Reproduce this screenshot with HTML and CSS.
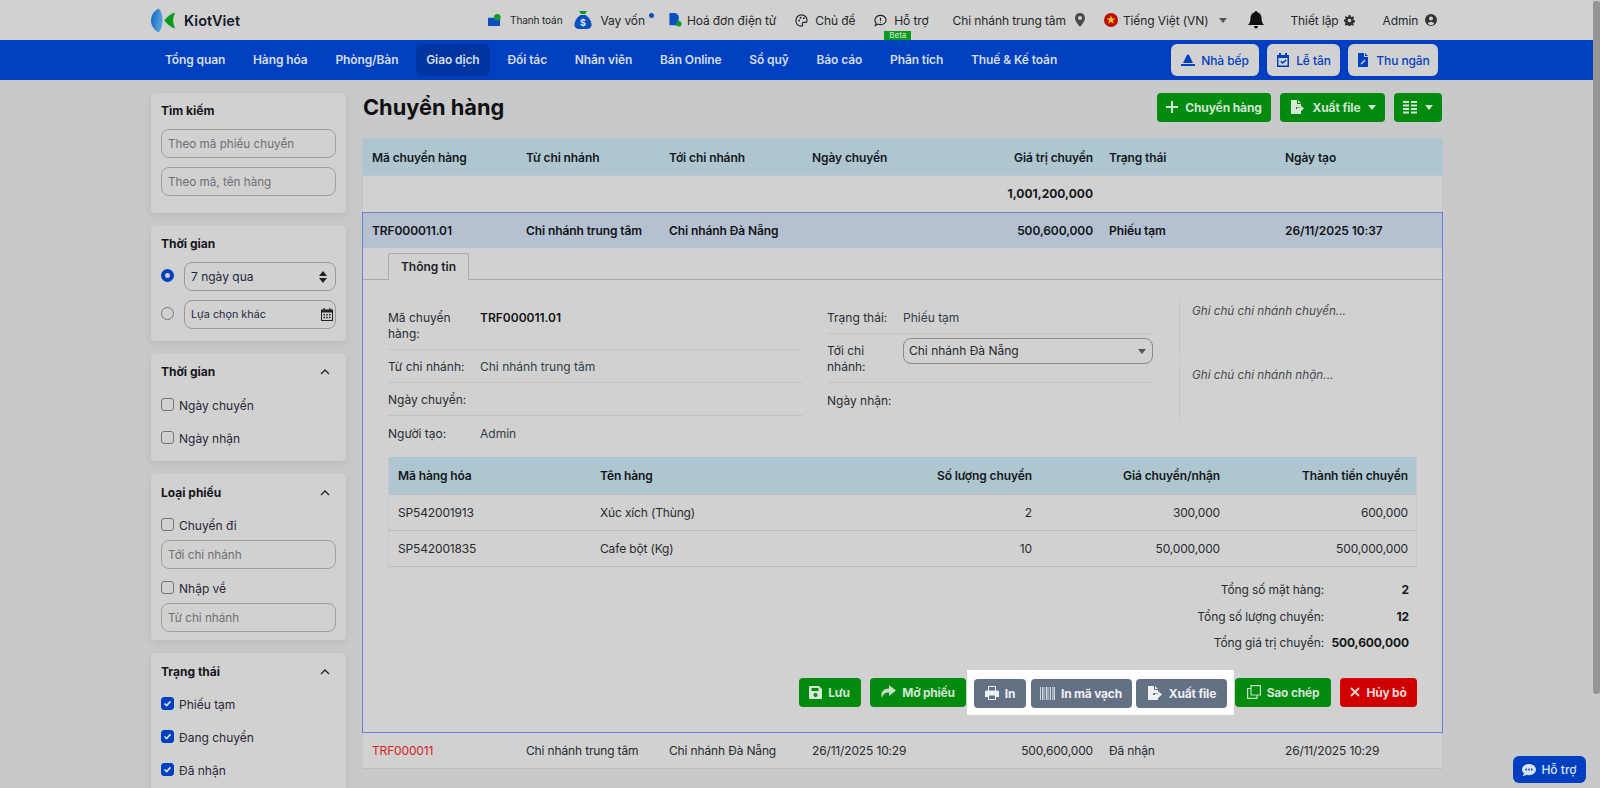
FILE: index.html
```html
<!DOCTYPE html>
<html lang="vi">
<head>
<meta charset="utf-8">
<title>Chuyển hàng</title>
<link rel="stylesheet" href="styles.css">
</head>
<body>
<div class="page">
  <header class="topbar">
    <div class="wrap top-in">
      <div class="logo">
        <svg class="logo-ic" viewBox="0 0 26 26"><defs><linearGradient id="lg" x1="0" x2="1" y1="0" y2="0.4"><stop offset="0" stop-color="#0d5fc0"/><stop offset="1" stop-color="#5aa4dc"/></linearGradient></defs><path fill="url(#lg)" d="M8 0.5C3 3 0 8 0 13s3 10 8 12.5c3-3 4-8 4-12.5S11 3.500 8 .5z"/><path fill="#0a9a1c" d="M25 5c-1 3-2 5-2 8s1 5 2 8c-4-.5-8-4-11-8 3-4 7-7.500 11-8z"/></svg>
        <span class="logo-t">KiotViet</span>
      </div>
      <div class="tl">
        <div class="ti"><svg class="i13" viewBox="0 0 14 14"><path fill="#0a4fc0" d="M0 4h8v1h5v8H0z"/><circle cx="10" cy="3.500" r="3.500" fill="#0f9a2a"/></svg><span class="small">Thanh toán</span></div>
        <div class="ti m12 g8"><svg class="i18" viewBox="0 0 18 18"><path fill="#0a9a1c" d="M5 0h8l-2 3H7z"/><path fill="#0a4fc0" d="M6.500 4h5C15 6 18 11 17.500 14.500 17 17 15 18 13 18H5c-2 0-4-1-4.500-3.500C0 11 3 6 6.500 4z"/><text x="9" y="14.500" class="dollar">$</text></svg><span class="dt">Vay vốn</span><span class="dot"></span></div>
        <div class="ti m14 g5"><svg class="i14" viewBox="0 0 14 15"><path fill="#0a4fc0" d="M1 0h7l3 3v10H1z"/><circle cx="11" cy="11.500" r="3" fill="#0f9a2a"/></svg><span>Hoá đơn điện tử</span></div>
        <div class="ti m19"><svg class="i13" viewBox="0 0 14 14"><path fill="none" stroke="#222" stroke-width="1.200" d="M7 1C3.500 1 1 3.500 1 7s2.500 6 6 6c1.500 0 1.500-1 1-2-.4-1 0-2 1.500-2H12c1 0 1-1 1-2 0-3.500-2.500-6-6-6z"/><circle cx="4.500" cy="7" r="1" fill="#222"/><circle cx="6" cy="4" r="1" fill="#222"/><circle cx="9.500" cy="4.500" r="1" fill="#222"/></svg><span>Chủ đề</span></div>
        <div class="ti m19 beta-host"><svg class="i13" viewBox="0 0 14 14"><path fill="none" stroke="#222" stroke-width="1.200" d="M7 1.500c3.300 0 6 2.200 6 5s-2.700 5-6 5c-1 0-2-.2-2.800-.6L1.500 12.500l.8-2.600C1.500 9 1 7.800 1 6.500c0-2.800 2.700-5 6-5z"/><path stroke="#222" stroke-width="1.200" d="M7 4v3.500M7 8.500v1"/></svg><span>Hỗ trợ</span><span class="beta">Beta</span></div>
        <div class="ti m24"><span>Chi nhánh trung tâm</span><svg class="i-pin" viewBox="0 0 10 14"><path fill="#4a4a4a" fill-rule="evenodd" d="M5 0C2 0 0 2.200 0 5c0 3 3 6.500 5 9 2-2.500 5-6 5-9 0-2.800-2-5-5-5zm0 3a2 2 0 110 4 2 2 0 010-4z"/></svg></div>
        <div class="ti m19 g5"><svg class="i14" viewBox="0 0 14 14"><circle cx="7" cy="7" r="7" fill="#c00d0d"/><path fill="#e8c810" d="M7 2.500l1.200 3h3.200L8.800 7.500l1 3.200L7 8.800l-2.800 1.900 1-3.200-2.600-2h3.200z"/></svg><span>Tiếng Việt (VN)</span><span class="caret caret-t"></span></div>
        <div class="ti m21"><svg class="i-bell" viewBox="0 0 16 18"><path fill="#111" d="M8 0c.8 0 1.300.6 1.300 1.300C12 2 13.500 4.200 13.500 7c0 4 1 5.500 2.500 7H0c1.500-1.500 2.500-3 2.500-7 0-2.800 1.500-5 4.200-5.700C6.700.6 7.200 0 8 0zM6 15h4c0 1.500-1 2.500-2 2.500S6 16.500 6 15z"/></svg></div>
        <div class="ti m26"><span>Thiết lập</span><svg class="i-gear" viewBox="0 0 12 12"><path fill="#333" fill-rule="evenodd" d="M5 0h2l.3 1.600 1.300.6L10 1.300 11.200 3l-1 1.200.3 1.300 1.500.5v2l-1.500.5-.4 1.300.9 1.200L10 11.700l-1.400-.9-1.300.6L7 12H5l-.3-.6-1.300-.6-1.400.9L.8 10l.9-1.200-.4-1.300L0 7V5l1.500-.5.300-1.300-1-1.200L2 1.300l1.400.9 1.300-.6zM6 4a2 2 0 100 4 2 2 0 000-4z"/></svg></div>
        <div class="ti m28"><span>Admin</span><svg class="i-user" viewBox="0 0 12 12"><path fill="#333" fill-rule="evenodd" d="M6 0a6 6 0 110 12A6 6 0 016 0zm0 2.500a2 2 0 100 4 2 2 0 000-4zM2.800 9.500c.8 1 2 1.500 3.200 1.500s2.400-.5 3.200-1.500C8.800 8.500 7.500 8 6 8s-2.800.5-3.200 1.500z"/></svg></div>
      </div>
    </div>
  </header>

  <nav class="navbar">
    <div class="wrap nav-in">
      <a class="ni">Tổng quan</a><a class="ni">Hàng hóa</a><a class="ni">Phòng/Bàn</a><a class="ni ni-on">Giao dịch</a><a class="ni">Đối tác</a><a class="ni">Nhân viên</a><a class="ni">Bán Online</a><a class="ni">Sổ quỹ</a><a class="ni">Báo cáo</a><a class="ni">Phân tích</a><a class="ni">Thuế &amp; Kế toán</a>
      <div class="nav-btns">
        <a class="nb nb1"><svg class="i14" viewBox="0 0 14 14"><path fill="#0040c0" d="M7 1.500c.6 0 1 .4 1.300 1L12 10H2l3.700-7.500c.3-.6.700-1 1.300-1zM0 11h14v2H0z"/></svg>Nhà bếp</a>
        <a class="nb nb2"><svg class="i14" viewBox="0 0 14 14"><path fill="#0040c0" fill-rule="evenodd" d="M3 0h2v2h4V0h2v2h2v12H1V2h2zm-.5 5v7.500h9V5zm7.200 1.500l1 1L6.500 11 4.200 8.700l1-1 1.300 1.300z"/></svg>Lễ tân</a>
        <a class="nb nb3"><svg class="i14" viewBox="0 0 14 14"><path fill="#0040c0" fill-rule="evenodd" d="M2 0h6v4h4v10H2zM9 0l3 3H9zM8.500 6.500L5 10l-.5 1.500L6 11l3.500-3.500z"/></svg>Thu ngân</a>
      </div>
    </div>
  </nav>

  <div class="wrap body-grid">
    <aside class="side">
      <section class="card c1">
        <h3 class="ct">Tìm kiếm</h3>
        <input class="inp" placeholder="Theo mã phiếu chuyển">
        <input class="inp mt9" placeholder="Theo mã, tên hàng">
      </section>
      <section class="card c2">
        <h3 class="ct">Thời gian</h3>
        <div class="rad-row"><span class="radio radio-on"></span><div class="fake"><span>7 ngày qua</span><svg class="i-sort" viewBox="0 0 8 12"><path fill="#222" d="M4 0l4 5H0zM4 12L0 7h8z"/></svg></div></div>
        <div class="rad-row mt9"><span class="radio"></span><div class="fake fake-sm"><span>Lựa chọn khác</span><svg class="i-cal" viewBox="0 0 12 13"><path fill="#222" fill-rule="evenodd" d="M2.500 0h1.200v1.500h4.600V0h1.200v1.500H12V13H0V1.500h2.500zM1 4.500V12h10V4.500zM2.500 6h1.500v1.500H2.500zM5.200 6h1.500v1.500H5.200zM8 6h1.500v1.500H8zM2.500 8.800h1.500v1.500H2.500zM5.200 8.800h1.500v1.500H5.200zM8 8.800h1.500v1.500H8z"/></svg></div></div>
      </section>
      <section class="card c3">
        <div class="ct-row"><h3 class="ct">Thời gian</h3><svg class="chev" viewBox="0 0 10 6"><path fill="none" stroke="#222" stroke-width="1.300" d="M1 5l4-4 4 4"/></svg></div>
        <label class="chk"><span class="cb"></span>Ngày chuyển</label>
        <label class="chk chk-gap"><span class="cb"></span>Ngày nhận</label>
      </section>
      <section class="card c4">
        <div class="ct-row"><h3 class="ct">Loại phiếu</h3><svg class="chev" viewBox="0 0 10 6"><path fill="none" stroke="#222" stroke-width="1.300" d="M1 5l4-4 4 4"/></svg></div>
        <label class="chk"><span class="cb"></span>Chuyển đi</label>
        <input class="inp mt5" placeholder="Tới chi nhánh">
        <label class="chk mt10"><span class="cb"></span>Nhập về</label>
        <input class="inp mt5" placeholder="Từ chi nhánh">
      </section>
      <section class="card c5">
        <div class="ct-row"><h3 class="ct">Trạng thái</h3><svg class="chev" viewBox="0 0 10 6"><path fill="none" stroke="#222" stroke-width="1.300" d="M1 5l4-4 4 4"/></svg></div>
        <label class="chk"><span class="cb cb-on"><svg viewBox="0 0 13 13"><path fill="none" stroke="#d8e0f0" stroke-width="2" d="M3 6.500l2.500 2.500L10 4"/></svg></span>Phiếu tạm</label>
        <label class="chk chk-gap2"><span class="cb cb-on"><svg viewBox="0 0 13 13"><path fill="none" stroke="#d8e0f0" stroke-width="2" d="M3 6.500l2.500 2.500L10 4"/></svg></span>Đang chuyển</label>
        <label class="chk chk-gap2"><span class="cb cb-on"><svg viewBox="0 0 13 13"><path fill="none" stroke="#d8e0f0" stroke-width="2" d="M3 6.500l2.500 2.500L10 4"/></svg></span>Đã nhận</label>
      </section>
    </aside>

    <main class="main">
      <div class="head">
        <h1 class="title">Chuyển hàng</h1>
        <div class="head-btns">
          <a class="btn green big hb1"><svg class="i12" viewBox="0 0 12 12"><path stroke="#d8e8d8" stroke-width="2" d="M6 0v12M0 6h12"/></svg>Chuyển hàng</a>
          <a class="btn green big hb2"><svg class="i16" viewBox="0 0 16 16"><path fill="#d8e8d8" d="M2 1h6v4h4v3H7v2h5v5H2zM9 1l3 3H9zM11 6l4 3.500-4 3.500v-2.500H8v-2h3z"/></svg>Xuất file<span class="caret caret-l"></span></a>
          <a class="btn green big grid-btn"><svg class="i14" viewBox="0 0 14 14"><path fill="#d8e8d8" d="M0 1h6v2H0zM8 1h6v2H8zM0 4.500h6v2H0zM8 4.500h6v2H8zM0 8h6v2H0zM8 8h6v2H8zM0 11.500h6v2H0zM8 11.500h6v2H8z"/></svg><span class="caret caret-l"></span></a>
        </div>
      </div>

      <div class="table">
        <div class="tr th"><div>Mã chuyển hàng</div><div>Từ chi nhánh</div><div>Tới chi nhánh</div><div>Ngày chuyển</div><div class="r">Giá trị chuyển</div><div>Trạng thái</div><div>Ngày tạo</div></div>
        <div class="tr tt"><div></div><div></div><div></div><div></div><div class="r">1,001,200,000</div><div></div><div></div></div>
        <div class="detail">
          <div class="tr sel"><div>TRF000011.01</div><div>Chi nhánh trung tâm</div><div>Chi nhánh Đà Nẵng</div><div></div><div class="r">500,600,000</div><div>Phiếu tạm</div><div>26/11/2025 10:37</div></div>
          <div class="tabs"><div class="tab">Thông tin</div></div>
          <div class="info">
            <div class="col-l">
              <div class="ir ir1"><span class="il">Mã chuyển hàng:</span><b>TRF000011.01</b></div>
              <div class="ir"><span class="il">Từ chi nhánh:</span><span class="iv">Chi nhánh trung tâm</span></div>
              <div class="ir"><span class="il">Ngày chuyển:</span></div>
              <div class="ir ir-last"><span class="il">Người tạo:</span><span class="iv">Admin</span></div>
            </div>
            <div class="col-r">
              <div class="ir ir-a"><span class="il il-r">Trạng thái:</span><span class="iv">Phiếu tạm</span></div>
              <div class="ir ir-b"><span class="il il-r">Tới chi nhánh:</span><div class="sel-box"><span>Chi nhánh Đà Nẵng</span><span class="caret"></span></div></div>
              <div class="ir ir-last"><span class="il il-r">Ngày nhận:</span></div>
            </div>
            <div class="col-n">
              <div class="note">Ghi chú chi nhánh chuyển...</div>
              <div class="note">Ghi chú chi nhánh nhận...</div>
            </div>
          </div>
          <div class="items">
            <div class="itr ith"><div>Mã hàng hóa</div><div>Tên hàng</div><div class="r">Số lượng chuyển</div><div class="r">Giá chuyển/nhận</div><div class="r">Thành tiền chuyển</div></div>
            <div class="itr"><div>SP542001913</div><div>Xúc xích (Thùng)</div><div class="r">2</div><div class="r">300,000</div><div class="r">600,000</div></div>
            <div class="itr"><div>SP542001835</div><div>Cafe bột (Kg)</div><div class="r">10</div><div class="r">50,000,000</div><div class="r">500,000,000</div></div>
          </div>
          <div class="sum">
            <div class="sr"><span>Tổng số mặt hàng:</span><b>2</b></div>
            <div class="sr"><span>Tổng số lượng chuyển:</span><b>12</b></div>
            <div class="sr"><span>Tổng giá trị chuyển:</span><b>500,600,000</b></div>
          </div>
          <div class="acts">
            <a class="btn green b-luu"><svg class="i13" viewBox="0 0 13 13"><path fill="#d8e8d8" fill-rule="evenodd" d="M1 0h9l3 3v9a1 1 0 01-1 1H1a1 1 0 01-1-1V1a1 1 0 011-1zm1.500 2v3h7V2zm4 5a2 2 0 100 4 2 2 0 000-4z"/></svg>Lưu</a>
            <a class="btn green b-mo"><svg class="i16" viewBox="0 0 16 14"><path fill="#c8dcc8" d="M9 0l7 5.500L9 11V7.500C5 7.500 3 9 2 13 0 8 3 3.500 9 3.500z"/></svg>Mở phiếu</a>
            <div class="spot">
              <a class="btn slate b-in"><svg class="i14" viewBox="0 0 14 14"><path fill="#eef0f4" fill-rule="evenodd" d="M3 0h8v4.500h1.500A1.500 1.500 0 0114 6v5h-3v3H3v-3H0V6a1.500 1.500 0 011.500-1.500H3zm1 1v3.500h6V1zm0 8.500V13h6V9.500z"/></svg>In</a>
              <a class="btn slate b-bar"><svg class="i15" viewBox="0 0 15 13"><path fill="#d0d6e0" d="M0 0h1v13H0zM2 0h1.500v13H2zM4.500 0h.7v13h-.7zM6 0h1.500v13H6zM8.500 0h.7v13h-.7zM10 0h1v13h-1zM12 0h.7v13H12zM13.500 0H15v13h-1.500z"/></svg>In mã vạch</a>
              <a class="btn slate b-xf"><svg class="i16" viewBox="0 0 16 16"><path fill="#eef0f4" d="M1 1h6v4h4v3H6v2h5v5H1zM8 1l3 3H8zM11 6l4 3.500-4 3.500v-2.500H8v-2h3z"/></svg>Xuất file</a>
            </div>
            <a class="btn green b-sc"><svg class="i14" viewBox="0 0 14 14"><path fill="none" stroke="#c8dcc8" stroke-width="1.200" d="M4 .6h9.400V10H4zM4 3.500H.6v9.900H10V10"/></svg>Sao chép</a>
            <a class="btn red b-hb"><svg class="i10" viewBox="0 0 10 10"><path stroke="#e8d0d0" stroke-width="2" d="M1 1l8 8M9 1L1 9"/></svg>Hủy bỏ</a>
          </div>
        </div>
        <div class="tr last"><div class="red-t">TRF000011</div><div>Chi nhánh trung tâm</div><div>Chi nhánh Đà Nẵng</div><div>26/11/2025 10:29</div><div class="r">500,600,000</div><div>Đã nhận</div><div>26/11/2025 10:29</div></div>
      </div>
    </main>
  </div>
</div>
<div class="scroll"><div class="thumb"></div></div>
<a class="help"><svg class="i14" viewBox="0 0 15 13"><path fill="#d8e4f4" fill-rule="evenodd" d="M7.500 0C11.600 0 15 2.600 15 6s-3.400 6-7.500 6c-1 0-1.900-.1-2.700-.4C3.800 12.500 2 13 .5 13c1-.9 1.500-1.900 1.600-3C.8 9 0 7.600 0 6c0-3.400 3.400-6 7.500-6zM4.500 5a1 1 0 100 2 1 1 0 000-2zm3 0a1 1 0 100 2 1 1 0 000-2zm3 0a1 1 0 100 2 1 1 0 000-2z"/></svg>Hỗ trợ</a>
</body>
</html>
```
FILE: styles.css
```css
* { box-sizing: border-box; }
html, body { margin: 0; height: 788px; overflow: hidden; }
body { display: flex; background: #c8c9cb; font-family: Inter, "Noto Sans", sans-serif; font-size: 12px; color: #1c1f24; }
.page { width: 1593px; flex: none; }
.wrap { width: 1292px; margin-left: 151px; }
svg { display: block; flex: none; }
a { text-decoration: none; }
h1, h3 { margin: 0; }

.scroll { width: 7px; flex: none; }
.thumb { height: 693px; margin-top: 1px; background: #959595; border-radius: 3px; }

.topbar { height: 40px; background: #d1d1d1; }
.top-in { display: flex; align-items: center; height: 40px; }
.logo { display: flex; align-items: center; gap: 8px; }
.logo-ic { width: 25px; height: 25px; }
.logo-t { font-size: 14.500px; font-weight: 600; color: #101828; }
.tl { display: flex; align-items: center; margin-left: 248px; height: 40px; color: #24272c; letter-spacing: -0.1px; }
.ti { display: flex; align-items: center; gap: 7px; position: relative; white-space: nowrap; }
.small { font-size: 10px; margin-left: 2px; }
.g5 { gap: 5px; } .g8 { gap: 8px; }
.m12 { margin-left: 12px; } .m14 { margin-left: 14px; } .m19 { margin-left: 19px; } .m21 { margin-left: 21px; }
.m24 { margin-left: 24px; } .m26 { margin-left: 26px; } .m28 { margin-left: 28px; }
.i10 { width: 10px; height: 10px; } .i12 { width: 12px; height: 12px; } .i13 { width: 13px; height: 13px; }
.i14 { width: 14px; height: 14px; } .i15 { width: 15px; height: 13px; } .i16 { width: 16px; height: 16px; }
.i18 { width: 18px; height: 18px; }
.dollar { font-size: 9px; font-weight: 700; fill: #d8e4f4; text-anchor: middle; }
.dot { width: 5px; height: 5px; border-radius: 50%; background: #0a4fc0; margin: -10px 0 0 -4px; }
.beta { position: absolute; left: 10px; top: 18px; width: 27px; height: 9px; background: #0a9a1c; color: #d8e8d8; font-size: 8px; line-height: 9px; text-align: center; letter-spacing: 0; }
.beta-host { height: 14px; }
.i-pin { width: 10px; height: 14px; margin-left: 2px; }
.caret { width: 0; height: 0; border-left: 4px solid transparent; border-right: 4px solid transparent; border-top: 5px solid #555; margin-left: 4px; }
.caret-t { margin-left: 6px; }
.caret-l { border-top-color: #d8e8d8; margin-left: 0; }
.i-bell { width: 16px; height: 18px; }
.i-gear { width: 11px; height: 11px; margin-left: -2px; }
.i-user { width: 12px; height: 12px; }

.navbar { height: 40px; background: #0040c0; }
.nav-in { display: flex; align-items: center; height: 40px; }
.ni { padding: 0 10px; margin: 0 3.900px; height: 32px; line-height: 32px; border-radius: 6px; color: #d5deef; font-weight: 600; white-space: nowrap; letter-spacing: -0.1px; }
.ni-on { background: #0035a0; }
.nav-btns { display: flex; gap: 8px; margin-left: auto; margin-right: 5px; }
.nb { display: flex; align-items: center; justify-content: center; gap: 6px; height: 32px; border-radius: 6px; background: #d1d1d1; color: #0040c0; font-weight: 500; white-space: nowrap; letter-spacing: -0.1px; }
.nb1 { width: 88px; } .nb2 { width: 73px; } .nb3 { width: 90px; }

.body-grid { display: flex; gap: 16px; align-items: flex-start; }
.side { width: 195px; flex: none; padding-top: 13px; }
.card { background: #d1d1d1; border-radius: 4px; box-shadow: 0 3px 8px rgba(0,0,0,.07); padding: 10px 10px 0; margin-bottom: 13px; }
.c1 { height: 120px; } .c2 { height: 115px; } .c3 { height: 107px; } .c4 { height: 166px; padding-top: 11px; } .c5 { height: 160px; margin-bottom: 0; padding-top: 11px; }
.ct { font-size: 12px; font-weight: 700; line-height: 15px; color: #14161a; }
.ct-row { display: flex; justify-content: space-between; align-items: center; padding-right: 6px; }
.chev { width: 10px; height: 6px; }
.inp { display: block; width: 175px; height: 29px; margin-top: 11px; padding: 0 6px; border: 1px solid #a0a0a0; border-radius: 8px; background: transparent; font: 11.700px Inter, sans-serif; color: #222; outline: 0; }
.inp::placeholder { color: #6d7076; opacity: 1; }
.mt9 { margin-top: 9px; }
.mt5.inp { margin-top: 6px; }
.mt10.chk { margin-top: 12px; }
.rad-row { display: flex; align-items: center; justify-content: space-between; margin-top: 11px; }
.rad-row.mt9 { margin-top: 9px; }
.radio { width: 13px; height: 13px; border-radius: 50%; border: 1px solid #777; flex: none; margin-top: -3px; }
.radio-on { border: 4px solid #0040c0; background: #d1d1d1; }
.fake { width: 152px; height: 29px; border: 1px solid #9a9a9a; border-radius: 8px; display: flex; align-items: center; justify-content: space-between; padding: 0 8px 0 6px; color: #1e2840; }
.fake-sm { font-size: 10.800px; padding-right: 2px; }
.i-sort { width: 8px; height: 12px; }
.i-cal { width: 12px; height: 13px; }
.chk { display: flex; align-items: center; gap: 5px; margin-top: 10px; line-height: 16px; color: #2a2638; }
.c3 .chk:first-of-type { margin-top: 19px; }
.c4 .chk:first-of-type { margin-top: 18px; }
.c5 .chk:first-of-type { margin-top: 18px; }
.chk-gap { margin-top: 17px; }
.chk-gap2 { margin-top: 17px; }
.cb { width: 13px; height: 13px; border: 1px solid #6f7680; border-radius: 3px; flex: none; margin-top: -4px; }
.cb-on { background: #0040c0; border-color: #0040c0; }
.cb-on svg { width: 11px; height: 11px; }

.main { flex: 1; width: 1081px; }
.head { display: flex; justify-content: space-between; align-items: center; height: 30px; margin-top: 12px; padding: 0 0 0 1px; }
.title { font-size: 21.800px; font-weight: 700; color: #111; line-height: 30px; }
.head-btns { display: flex; gap: 9px; margin-right: 1px; }
.btn { display: inline-flex; align-items: center; justify-content: center; height: 29px; border-radius: 4px; font-weight: 700; white-space: nowrap; flex: none; letter-spacing: -0.1px; }
.big { gap: 7px; }
.green { background: #008a0e; color: #d2e4d2; }
.slate { background: #647084; color: #eef0f4; }
.red { background: #d10000; color: #eed6d6; }
.hb1 { width: 114px; } .hb2 { width: 105px; }
.grid-btn { width: 48px; gap: 8px; }

.table { margin-top: 16px; background: #d1d1d1; }
.tr { display: grid; grid-template-columns: 163px 143px 143px 140px 141px 192px 1fr; align-items: center; }
.tr > div:first-child { padding-left: 9px; }
.tr > div:nth-child(6) { padding-left: 16px; }
.r { text-align: right; }
.th { height: 38px; background: #aec6d0; border: 1px solid #bcc8d0; font-weight: 600; color: #14181c; letter-spacing: -0.1px; }
.tt { height: 36px; padding-bottom: 1px; font-weight: 700; border-left: 1px solid #c4c4c4; border-right: 1px solid #c4c4c4; color: #14181c; }
.detail { border: 1px solid #6a80d4; height: 521px; }
.sel { height: 35px; background: #b5c1d0; font-weight: 600; color: #101418; letter-spacing: -0.1px; }
.tabs { height: 32px; border-bottom: 1px solid #aaa; padding: 5px 0 0 25px; }
.tab { width: 81px; height: 27px; border: 1px solid #aaa; border-bottom: 0; background: #d1d1d1; border-radius: 2px 2px 0 0; text-align: center; line-height: 26px; font-weight: 600; color: #1e2428; }
.info { display: flex; padding: 22px 25px 0; height: 177px; }
.col-l { width: 415px; flex: none; }
.col-r { width: 326px; margin-left: 24px; flex: none; }
.col-n { margin-left: 26px; flex: 1; margin-top: -1px; }
.ir { display: flex; padding: 9px 0 7px; line-height: 16px; border-bottom: 1px solid #c4c4c4; color: #2c3438; }
.ir1 { padding: 8px 0 7px; }
.ir-last { border-bottom: 0; padding-top: 10px; }
.il { width: 92px; flex: none; color: #2a2e34; }
.il-r { width: 76px; }
.iv { color: #2f4048; }
.ir b { font-weight: 600; color: #101418; }
.ir-a { padding: 8px 0 7px; }
.ir-b { padding: 9px 0 7px; }
.sel-box { flex: 1; height: 26px; margin-top: -5px; border: 1px solid #8c8c8c; border-radius: 8px; display: flex; align-items: center; justify-content: space-between; padding: 0 6px 0 5px; color: #24282e; }
.note { height: 56px; border-left: 1px solid #c4c4c4; padding: 2px 0 0 12px; font-style: italic; font-size: 11.700px; line-height: 16px; color: #474b52; }
.note + .note { margin-top: 8px; }
.items { margin: 0 25px; }
.itr { display: grid; grid-template-columns: 211px 300px 142px 188px 1fr; height: 36px; align-items: center; border-bottom: 1px solid #bdbdbd; border-left: 1px solid #c8c8c8; border-right: 1px solid #c8c8c8; color: #272b30; letter-spacing: -0.15px; }
.itr > div { padding: 0 10px 0 0; }
.itr > div:first-child { padding-left: 9px; }
.itr > div:last-child { padding-right: 8px; }
.ith { height: 38px; background: #aec6d0; font-weight: 600; color: #14181c; letter-spacing: -0.1px; }
.sum { margin: 10px 33px 0 0; letter-spacing: -0.1px; }
.sr { display: flex; justify-content: flex-end; height: 26.500px; line-height: 26.500px; color: #2a2e34; }
.sr b { width: 85px; text-align: right; font-weight: 700; color: #14181c; }
.acts { display: flex; justify-content: flex-end; align-items: center; gap: 9px; margin: 21px 25px 0 0; height: 29px; }
.btn svg { margin-right: 6px; }
.acts .btn { letter-spacing: -0.2px; }
.big svg { margin-right: 0; }
.b-luu { width: 62px; } .b-mo { width: 96px; } .b-in { width: 52px; } .b-bar { width: 101px; } .b-xf { width: 91px; } .b-sc { width: 96px; } .b-hb { width: 77px; }
.spot { display: flex; gap: 4.500px; background: #fff; padding: 9px 7px 7px 7.500px; margin: 0 -8px; position: relative; }
.last { height: 36px; border-bottom: 1px solid #bdbdbd; border-left: 1px solid #c8c8c8; border-right: 1px solid #c8c8c8; color: #272b30; letter-spacing: -0.15px; }
.red-t { color: #d81e1e; }

.help { position: absolute; left: 1513px; top: 756px; width: 73px; height: 27px; border-radius: 6px; background: #0040c0; color: #d8e4f4; display: flex; align-items: center; justify-content: center; gap: 5px; font-size: 12px; font-weight: 500; }
```
